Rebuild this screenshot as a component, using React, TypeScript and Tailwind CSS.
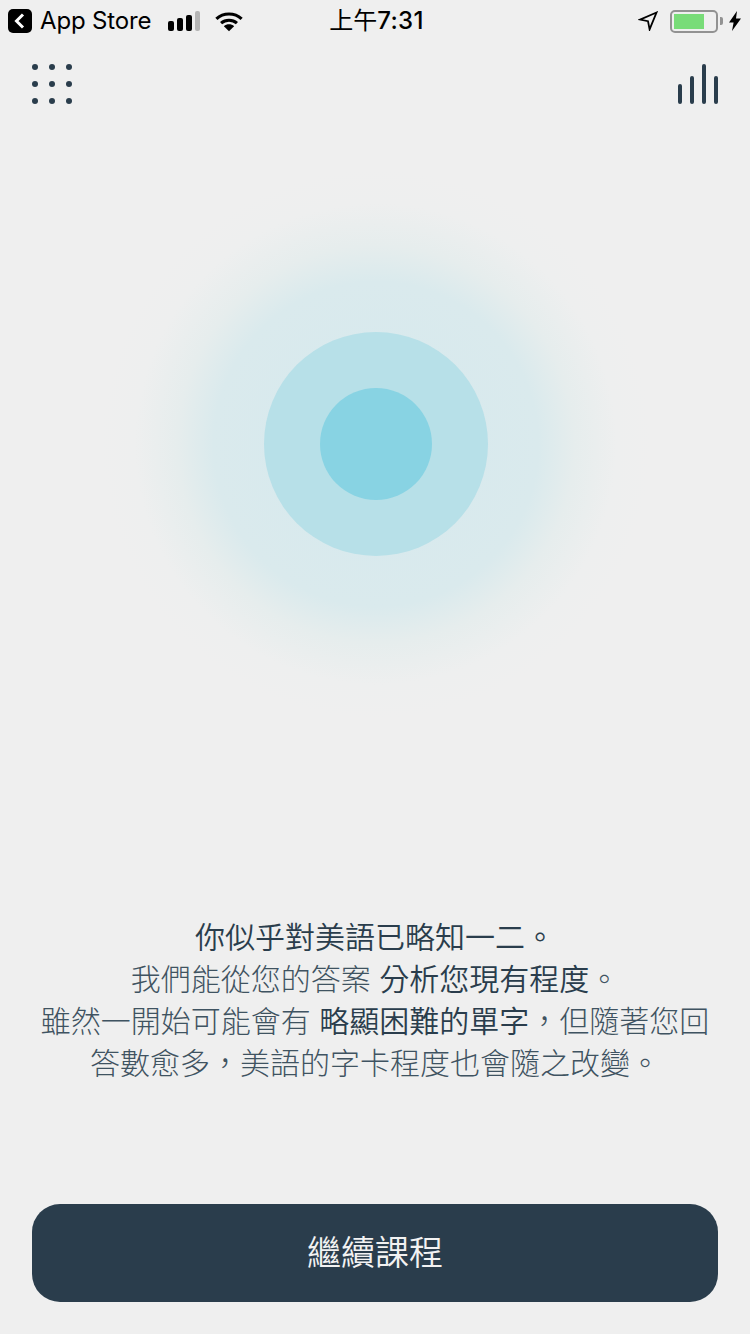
import React, { FC } from 'react';

const FONT = "font-['Liberation_Sans','Noto_Sans_CJK_TC',sans-serif]";

const BackBadge: FC = () => (
  <svg width="24" height="24" viewBox="0 0 24 24" className="shrink-0">
    <rect width="24" height="24" rx="5" fill="#000" />
    <path d="M15 5.5 8.5 12l6.5 6.5" fill="none" stroke="#fff" strokeWidth="3" />
  </svg>
);

const Signal: FC = () => (
  <div className="flex items-end gap-[3px] h-[20px]">
    <span className="w-[6px] h-[10px] rounded-[2px] bg-black" />
    <span className="w-[6px] h-[13px] rounded-[2px] bg-black" />
    <span className="w-[6px] h-[16px] rounded-[2px] bg-black" />
    <span className="w-[5px] h-[20px] rounded-[2px] bg-[#b5b5b5]" />
  </div>
);

const Wifi: FC = () => (
  <svg width="28" height="21" viewBox="0 0 30 22" fill="none" stroke="#000" strokeWidth="3.4">
    <path d="M1.5 8.2C9 1.2 21 1.2 28.5 8.2" />
    <path d="M6.5 12.8c4.8-4.2 12.2-4.2 17 0" />
    <path d="M15 21.5 9.5 16c3-2.6 8-2.6 11 0z" fill="#000" stroke="none" />
  </svg>
);

const Arrow: FC = () => (
  <svg width="20" height="20" viewBox="0 0 20 20" fill="none" stroke="#000" strokeWidth="1.8">
    <path d="M18.5 1.5 2 8.6l8 1.6 1.6 8.2z" strokeLinejoin="miter" />
  </svg>
);

const Battery: FC = () => (
  <div className="flex items-center">
    <div className="w-[48px] h-[23px] rounded-[5px] border-2 border-[#929292] p-[2px]">
      <div className="w-[30px] h-full bg-[#78dc78]" />
    </div>
    <span className="w-[3px] h-[8px] ml-[2px] rounded-r-[2px] bg-[#929292]" />
  </div>
);

const Bolt: FC = () => (
  <svg width="12" height="20" viewBox="0 0 12 20" fill="#000">
    <path d="M8 0 0 11.5h4.6L3 20l9-12.5H7z" />
  </svg>
);

const MenuDots: FC = () => (
  <div className="grid grid-cols-3 gap-x-[11px] gap-y-[11px] w-[40px]">
    {[0, 1, 2, 3, 4, 5, 6, 7, 8].map(i => (
      <span key={i} className="w-[6px] h-[6px] rounded-full bg-[#2a3d4c]" />
    ))}
  </div>
);

const StatsBars: FC = () => (
  <div className="flex items-end gap-[8px] h-[40px]">
    <span className="w-[4px] h-[20px] rounded-full bg-[#2a3d4c]" />
    <span className="w-[4px] h-[28px] rounded-full bg-[#2a3d4c]" />
    <span className="w-[4px] h-[40px] rounded-full bg-[#2a3d4c]" />
    <span className="w-[4px] h-[28px] rounded-full bg-[#2a3d4c]" />
  </div>
);

const App: FC = () => {
  return (
    <div className={`w-[750px] h-[1334px] flex flex-col overflow-hidden bg-[#efefef] ${FONT}`}>
      <div className="h-[40px] shrink-0 grid grid-cols-3 items-center pl-[8px] pr-[9px] pt-[2px] text-black text-[24px]">
        <div className="flex items-center">
          <BackBadge />
          <span className="ml-[8px] whitespace-nowrap font-['Inter'] tracking-[-0.15px]">App Store</span>
          <span className="ml-[17px]"><Signal /></span>
          <span className="ml-[15px]"><Wifi /></span>
        </div>
        <div className="text-center whitespace-nowrap pl-[4px]">
          上午<span className="font-['Inter'] font-medium tracking-[0.3px]">7:31</span>
        </div>
        <div className="flex items-center justify-end gap-[12px]">
          <Arrow />
          <div className="flex items-center gap-[6px]">
            <Battery />
            <Bolt />
          </div>
        </div>
      </div>

      <div className="shrink-0 flex justify-between items-start px-[32px] pt-[24px]">
        <MenuDots />
        <StatsBars />
      </div>

      <div className="h-[773px] shrink-0 flex justify-center pt-[60px] pl-[2px]">
        <div className="w-[560px] h-[560px] rounded-full flex items-center justify-center bg-[radial-gradient(circle_closest-side,#d6e9ee_0%,#daeaed_58%,#e6eded_71%,#eeefef_86%,#efefef_98%)]">
          <div className="w-[224px] h-[224px] rounded-full flex items-center justify-center bg-[#b7e0e8]">
            <div className="w-[112px] h-[112px] rounded-full bg-[#88d3e3]" />
          </div>
        </div>
      </div>

      <div className="shrink-0 pt-[40px] px-[32px] text-center text-[30px] leading-[42px] font-light text-[#3f5361]">
        <p className="font-[350] text-[#2a3d4c]">你似乎對美語已略知一二。</p>
        <p>我們能從您的答案 <span className="font-[350] text-[#2a3d4c]">分析您現有程度</span>。</p>
        <p>雖然一開始可能會有 <span className="font-[350] text-[#2a3d4c]">略顯困難的單字</span>，但隨著您回</p>
        <p>答數愈多，美語的字卡程度也會隨之改變。</p>
      </div>

      <div className="mt-auto px-[32px] pb-[32px]">
        <button className="w-full h-[98px] rounded-[28px] bg-[#2a3d4c] text-[#f2f2f2] text-[34px] font-[350]">
          繼續課程
        </button>
      </div>
    </div>
  );
};

export default App;
